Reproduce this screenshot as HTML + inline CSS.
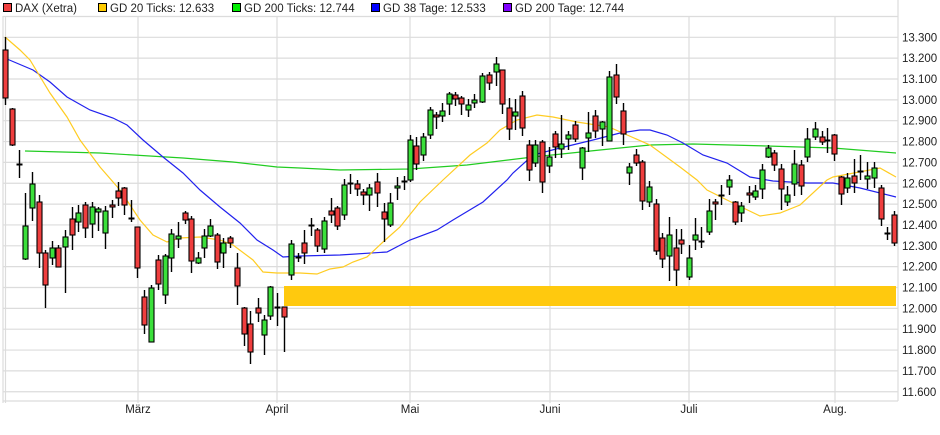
<!DOCTYPE html>
<html><head><meta charset="utf-8"><style>
html,body{margin:0;padding:0;background:#fff;}
body{width:940px;height:435px;overflow:hidden;font-family:"Liberation Sans",sans-serif;}
</style></head><body>
<svg id="c" width="940" height="435" xmlns="http://www.w3.org/2000/svg" style="display:block">
<g font-family="Liberation Sans, sans-serif" font-size="11.5" fill="#222">
<rect x="3.5" y="3.5" width="8" height="8" fill="#f04040" stroke="#000"/><text x="15" y="12">DAX (Xetra)</text>
<rect x="98.5" y="3.5" width="8" height="8" fill="#ffcc00" stroke="#000"/><text x="110" y="12">GD 20 Ticks: 12.633</text>
<rect x="232.5" y="3.5" width="8" height="8" fill="#00ee00" stroke="#000"/><text x="244" y="12">GD 200 Ticks: 12.744</text>
<rect x="371.5" y="3.5" width="8" height="8" fill="#0000ff" stroke="#000"/><text x="383" y="12">GD 38 Tage: 12.533</text>
<rect x="503.5" y="3.5" width="8" height="8" fill="#8000ff" stroke="#000"/><text x="515" y="12">GD 200 Tage: 12.744</text>
</g>
<g id="grid" stroke="#dcdcdc" stroke-width="1.2" fill="none"></g>
<rect x="284" y="286" width="612" height="20" fill="#ffc90e"/>
<g id="ma" fill="none" stroke-width="1.2"></g>
<g id="cd"></g>
<g id="lab" font-family="Liberation Sans, sans-serif" font-size="11.5" fill="#222"></g>
</svg>
<script>
var NS="http://www.w3.org/2000/svg";
function el(p,t,a,txt){var e=document.createElementNS(NS,t);for(var k in a)e.setAttribute(k,a[k]);if(txt)e.textContent=txt;document.getElementById(p).appendChild(e);return e;}
// grid
for(var i=0;i<=17;i++){var y=37.3+i*20.85;el("grid","line",{x1:3,x2:898,y1:y,y2:y});
 el("lab","text",{x:902,y:y+4},(13300-i*100).toLocaleString?((13300-i*100)/1000).toFixed(3):"");}
el("grid","line",{x1:3,x2:898,y1:16.5,y2:16.5});
el("grid","line",{x1:3,x2:898,y1:401,y2:401});
el("grid","line",{x1:3,x2:3,y1:16,y2:403});
el("grid","line",{x1:5.5,x2:5.5,y1:16,y2:403});
el("grid","line",{x1:898,x2:898,y1:0,y2:401});
var mx=[[138,"März"],[277,"April"],[410,"Mai"],[550,"Juni"],[689,"Juli"],[835,"Aug."]];
mx.forEach(function(m){el("grid","line",{x1:m[0],x2:m[0],y1:16,y2:403});el("lab","text",{x:m[0],y:413,"text-anchor":"middle"},m[1]);});
// MAs
function pl(c,pts){el("ma","polyline",{stroke:c,points:pts.map(function(p){return p.join(",")}).join(" ")});}
pl("#22cc22",[[25,151],[100,153],[183,158],[233,162],[277,167],[300,168],[340,170],[410,169],[467,165],[533,157],[600,150],[650,145],[693,144],[767,146],[833,148],[896,153]]);
pl("#2222ee",[[7,59],[33,70],[50,82],[67,97],[90,110],[113,118],[127,125],[143,140],[163,157],[183,173],[200,190],[220,207],[240,223],[257,240],[273,250],[283,257],[300,256],[340,255],[387,252],[410,240],[437,230],[453,220],[483,202],[507,180],[513,173],[533,155],[560,148],[593,140],[620,133],[640,130],[650,130],[667,135],[683,143],[703,155],[727,163],[750,177],[773,181],[807,183],[833,183],[860,188],[896,197]]);
pl("#ffcc22",[[5,37],[20,50],[30,60],[50,93],[67,117],[80,140],[100,167],[120,190],[140,220],[153,235],[167,242],[180,238],[200,237],[220,240],[233,245],[253,260],[263,272],[277,273],[300,273],[317,274],[330,269],[343,267],[353,262],[367,257],[383,242],[400,227],[420,202],[443,180],[470,155],[487,143],[500,130],[517,120],[537,115],[553,117],[577,122],[609,127],[650,145],[680,167],[697,180],[707,190],[733,203],[760,216],[780,213],[800,205],[827,180],[833,177],[880,168],[896,177]]);
// candles [cx,hi,lo,top,bot,color]
var R="r",G="g",D="d";
var C=[
[5,37,105,50,98,R],[12,108,146,109,145,R],[19,150,178,164,164,D],[25,193,260,226,259,G],[32,172,221,184,208,G],[39,195,268,202,253,R],[45,250,308,253,285,R],[52,241,265,248,258,G],[58,245,267,248,267,R],[65,230,293,237,247,G],[72,207,250,219,235,R],[78,205,232,213,222,G],[85,202,238,205,228,R],[92,202,238,207,224,G],[98,207,231,209,212,G],[105,206,249,211,233,G],[112,200,218,205,207,R],[118,182,206,191,198,R],[124,187,215,188,205,R],[131,200,222,218,218,D],[137,227,278,227,268,R],
[144,290,334,297,325,R],[151,285,342,288,342,G],[158,255,290,260,284,R],[165,254,304,256,295,G],[171,229,272,234,258,G],[178,222,248,236,239,G],[185,211,224,213,220,R],[191,216,273,219,261,R],[198,252,264,258,263,G],[204,229,258,236,248,G],[210,219,237,226,236,G],[217,233,269,235,262,R],[223,238,268,243,253,G],[230,236,248,238,243,R],[237,253,305,268,286,R],[244,307,346,308,334,R],[250,311,364,324,352,R],[258,298,322,308,313,R],[264,315,355,320,335,G],[270,286,320,287,316,G],[277,293,326,307,307,D],[284,307,352,307,317,R],
[291,240,280,244,275,G],[298,253,262,257,257,D],[304,230,264,243,253,R],[311,218,236,225,225,D],[317,228,252,230,246,R],[324,217,253,221,249,G],[331,198,223,211,215,R],[337,206,230,208,226,R],[344,179,220,185,215,G],[350,174,194,183,183,D],[357,180,196,184,189,R],[363,189,205,192,195,R],[369,184,211,188,195,G],[377,173,207,182,193,R],[384,203,242,212,219,R],[390,193,227,203,225,G],[397,177,200,186,188,G],[404,176,190,181,181,D],
[410,135,182,140,180,G],[416,137,170,146,164,R],[423,133,161,137,155,G],[430,107,139,110,135,G],[436,112,129,115,117,R],[442,103,122,111,116,G],[449,92,115,94,104,G],[455,92,106,95,99,R],[461,96,115,98,104,R],[468,99,117,105,110,G],[474,94,108,100,103,G],[482,73,103,76,102,G],[489,72,90,75,83,R],[496,57,86,64,72,G],[502,70,114,70,104,R],[509,98,140,108,129,R],[515,99,130,112,116,G],[522,91,136,96,128,R],[529,140,181,145,170,R],[535,140,167,145,163,G],[542,140,193,142,182,R],[549,147,173,157,166,G],[555,131,158,134,147,R],[561,115,158,144,149,G],[568,131,150,135,139,G],[575,121,142,125,139,R],[582,147,180,148,168,G],[588,112,152,133,138,G],[595,110,138,116,131,R],[602,121,146,122,129,G],[609,71,141,77,141,G],[616,64,104,75,97,R],
[623,103,145,111,134,R],[629,163,185,167,173,G],[636,149,166,155,163,R],[642,160,210,162,201,R],[649,181,207,187,202,G],[656,199,255,204,251,R],[662,233,268,238,259,R],[669,217,281,235,256,G],[676,229,286,248,270,R],[681,229,254,240,244,R],[689,245,280,258,277,G],[695,218,250,235,240,G],[701,227,248,241,241,D],[709,199,235,211,232,G],[715,199,220,202,204,R],[721,185,205,195,195,D],[729,175,195,180,187,G],[735,201,225,202,222,R],[741,202,222,206,213,G],[749,186,203,193,195,R],[755,185,200,191,197,G],[762,164,199,170,189,G],[768,145,158,148,157,G],[774,150,171,153,165,R],[781,164,210,169,189,R],[787,186,206,195,202,G],[794,150,196,164,184,G],[801,160,195,165,186,R],[807,128,162,139,157,G],[815,122,140,129,137,G],[822,131,145,137,142,R],[827,128,153,140,140,D],[834,134,161,135,154,R],[841,176,205,177,194,R],[847,173,193,178,188,G],[854,159,193,176,183,R],[860,155,180,171,171,D],[867,162,189,176,179,G],[874,162,188,168,178,G],[881,185,226,188,219,R],[887,227,240,233,233,D],[894,211,246,215,243,R]
];
C.forEach(function(c){
 var x=c[0]+0.5;
 el("cd","line",{x1:x,x2:x,y1:c[1],y2:c[2],stroke:"#000","stroke-width":1.4});
 if(c[5]==D){el("cd","line",{x1:x-3,x2:x+3,y1:c[3]+0.5,y2:c[3]+0.5,stroke:"#000","stroke-width":2});}
 else{var h=Math.max(2,c[4]-c[3]);el("cd","rect",{x:c[0]-2,y:c[3],width:5,height:h,fill:c[5]==R?"#ef3e3e":"#3be03b",stroke:"#000","stroke-width":1.1});}
});
</script>
</body></html>
